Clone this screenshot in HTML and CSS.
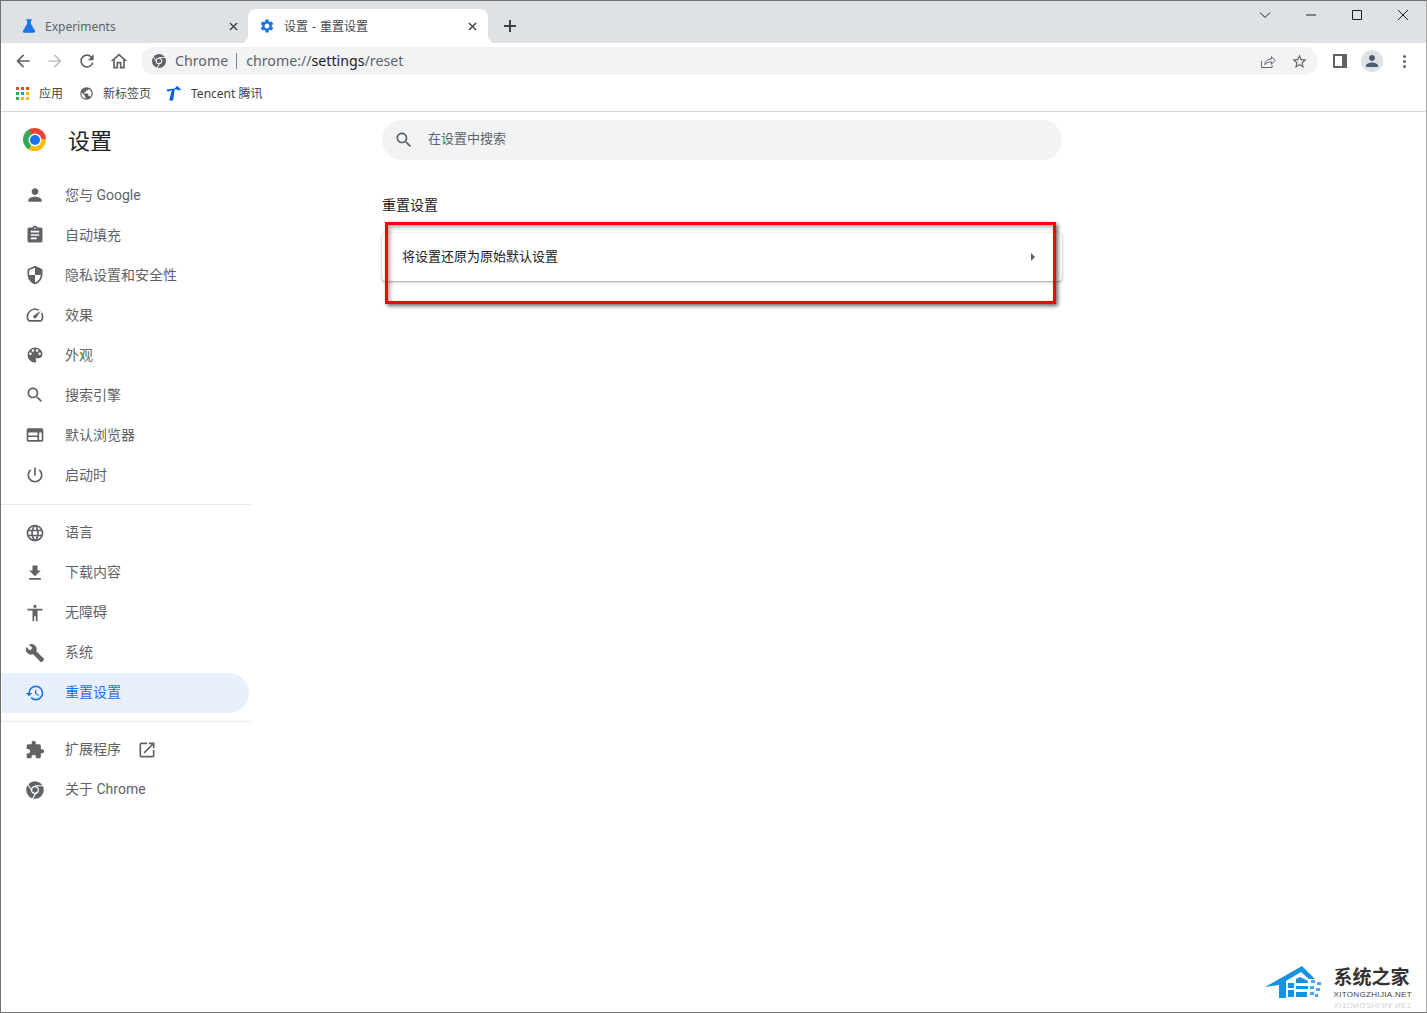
FILE: index.html
```
<!DOCTYPE html>
<html lang="zh-CN">
<head>
<meta charset="utf-8">
<title>设置 - 重置设置</title>
<link rel="stylesheet" href="styles.css">
</head>
<body>
<svg class="sprite" width="0" height="0" aria-hidden="true">
  <defs>
    <symbol id="i-person" viewBox="0 0 24 24"><path d="M12 12c2.21 0 4-1.79 4-4s-1.79-4-4-4-4 1.79-4 4 1.79 4 4 4zm0 2c-2.67 0-8 1.34-8 4v2h16v-2c0-2.66-5.33-4-8-4z"/></symbol>
    <symbol id="i-assign" viewBox="0 0 24 24"><path d="M19 3h-4.18C14.4 1.84 13.3 1 12 1c-1.3 0-2.4.84-2.82 2H5c-1.1 0-2 .9-2 2v14c0 1.1.9 2 2 2h14c1.1 0 2-.9 2-2V5c0-1.1-.9-2-2-2zm-7 0c.55 0 1 .45 1 1s-.45 1-1 1-1-.45-1-1 .45-1 1-1zm2 14H7v-2h7v2zm3-4H7v-2h10v2zm0-4H7V7h10v2z"/></symbol>
    <symbol id="i-shield" viewBox="0 0 24 24"><path d="M12 1L3 5v6c0 5.55 3.84 10.74 9 12 5.16-1.26 9-6.45 9-12V5l-9-4zm0 10.99h7c-.53 4.12-3.28 7.79-7 8.94V12H5V6.3l7-3.11v8.8z"/></symbol>
    <symbol id="i-speed" viewBox="0 0 24 24"><path d="M20.38 8.57l-1.23 1.85a8 8 0 0 1-.22 7.58H5.07A8 8 0 0 1 15.58 6.85l1.85-1.23A10 10 0 0 0 3.35 19a2 2 0 0 0 1.72 1h13.85a2 2 0 0 0 1.74-1 10 10 0 0 0-.27-10.44zm-9.79 6.84a2 2 0 0 0 2.83 0l5.66-8.49-8.49 5.66a2 2 0 0 0 0 2.83z"/></symbol>
    <symbol id="i-palette" viewBox="0 0 24 24"><path d="M12 3a9 9 0 0 0 0 18c.83 0 1.5-.67 1.5-1.5 0-.39-.15-.74-.39-1.01-.23-.26-.38-.61-.38-.99 0-.83.67-1.5 1.5-1.5H16c2.76 0 5-2.24 5-5 0-4.42-4.03-8-9-8zm-5.5 9c-.83 0-1.5-.67-1.5-1.5S5.67 9 6.5 9 8 9.67 8 10.5 7.33 12 6.5 12zm3-4C8.67 8 8 7.33 8 6.5S8.67 5 9.5 5s1.5.67 1.5 1.5S10.33 8 9.5 8zm5 0c-.83 0-1.5-.67-1.5-1.5S13.67 5 14.5 5s1.5.67 1.5 1.5S15.33 8 14.5 8zm3 4c-.83 0-1.5-.67-1.5-1.5S16.67 9 17.5 9s1.5.67 1.5 1.5-.67 1.5-1.5 1.5z"/></symbol>
    <symbol id="i-search" viewBox="0 0 24 24"><path d="M15.5 14h-.79l-.28-.27C15.41 12.59 16 11.11 16 9.5 16 5.91 13.09 3 9.5 3S3 5.91 3 9.5 5.91 16 9.5 16c1.61 0 3.09-.59 4.23-1.57l.27.28v.79l5 4.99L20.49 19l-4.99-5zm-6 0C7.01 14 5 11.99 5 9.5S7.01 5 9.5 5 14 7.01 14 9.5 11.99 14 9.5 14z"/></symbol>
    <symbol id="i-web" viewBox="0 0 24 24"><path d="M20 4H4c-1.1 0-2 .9-2 2v12c0 1.1.9 2 2 2h16c1.1 0 2-.9 2-2V6c0-1.1-.9-2-2-2zM4 9h11v3.5H4V9zm0 5.5h11V18H4v-3.5zM20 18h-3V9h3v9z"/></symbol>
    <symbol id="i-power" viewBox="0 0 24 24"><path d="M13 3h-2v10h2V3zm4.83 2.17l-1.42 1.42C17.99 7.86 19 9.81 19 12c0 3.87-3.13 7-7 7s-7-3.13-7-7c0-2.19 1.01-4.14 2.58-5.42L6.17 5.17C4.23 6.82 3 9.26 3 12c0 4.97 4.03 9 9 9s9-4.03 9-9c0-2.74-1.23-5.18-3.17-6.83z"/></symbol>
    <symbol id="i-lang" viewBox="0 0 24 24"><path d="M11.99 2C6.47 2 2 6.48 2 12s4.47 10 9.99 10C17.52 22 22 17.52 22 12S17.52 2 11.99 2zm6.93 6h-2.95c-.32-1.25-.78-2.45-1.38-3.56 1.84.63 3.37 1.91 4.33 3.56zM12 4.04c.83 1.2 1.48 2.53 1.91 3.96h-3.82c.43-1.43 1.08-2.76 1.91-3.96zM4.26 14C4.1 13.36 4 12.69 4 12s.1-1.36.26-2h3.38c-.08.66-.14 1.32-.14 2 0 .68.06 1.34.14 2H4.26zm.82 2h2.95c.32 1.25.78 2.45 1.38 3.56-1.84-.63-3.37-1.9-4.33-3.56zm2.95-8H5.08c.96-1.66 2.49-2.93 4.33-3.56C8.81 5.55 8.35 6.75 8.03 8zM12 19.96c-.83-1.2-1.48-2.53-1.91-3.96h3.82c-.43 1.43-1.08 2.76-1.91 3.96zM14.34 14H9.66c-.09-.66-.16-1.32-.16-2 0-.68.07-1.35.16-2h4.68c.09.65.16 1.32.16 2 0 .68-.07 1.34-.16 2zm.25 5.56c.6-1.11 1.06-2.31 1.38-3.56h2.95c-.96 1.65-2.49 2.93-4.33 3.56zM16.36 14c.08-.66.14-1.32.14-2 0-.68-.06-1.34-.14-2h3.38c.16.64.26 1.31.26 2s-.1 1.36-.26 2h-3.38z"/></symbol>
    <symbol id="i-download" viewBox="0 0 24 24"><path d="M19 9h-4V3H9v6H5l7 7 7-7zM5 18v2h14v-2H5z"/></symbol>
    <symbol id="i-access" viewBox="0 0 24 24"><path d="M12 2c1.1 0 2 .9 2 2s-.9 2-2 2-2-.9-2-2 .9-2 2-2zm9 7h-6v13h-2v-6h-2v6H9V9H3V7h18v2z"/></symbol>
    <symbol id="i-build" viewBox="0 0 24 24"><path d="M22.7 19l-9.1-9.1c.9-2.3.4-5-1.5-6.9-2-2-5-2.4-7.4-1.3L9 6 6 9 1.6 4.7C.4 7.1.9 10.1 2.9 12.1c1.9 1.9 4.6 2.4 6.9 1.5l9.1 9.1c.4.4 1 .4 1.4 0l2.3-2.3c.5-.4.5-1.1.1-1.4z"/></symbol>
    <symbol id="i-restore" viewBox="0 0 24 24"><path d="M13 3a9 9 0 0 0-9 9H1l3.89 3.89.07.14L9 12H6c0-3.87 3.13-7 7-7s7 3.13 7 7-3.13 7-7 7c-1.93 0-3.68-.79-4.94-2.06l-1.42 1.42A8.954 8.954 0 0 0 13 21a9 9 0 0 0 0-18zm-1 5v5l4.28 2.54.72-1.21-3.5-2.08V8H12z"/></symbol>
    <symbol id="i-ext" viewBox="0 0 24 24"><path d="M20.5 11H19V7c0-1.1-.9-2-2-2h-4V3.5C13 2.12 11.88 1 10.5 1S8 2.12 8 3.5V5H4c-1.1 0-1.99.9-1.99 2v3.8H3.5c1.49 0 2.7 1.21 2.7 2.7s-1.21 2.7-2.7 2.7H2V20c0 1.1.9 2 2 2h3.8v-1.5c0-1.49 1.21-2.7 2.7-2.7 1.49 0 2.7 1.21 2.7 2.7V22H17c1.1 0 2-.9 2-2v-4h1.5c1.38 0 2.5-1.12 2.5-2.5S21.88 11 20.5 11z"/></symbol>
    <symbol id="i-open" viewBox="0 0 24 24"><path d="M19 19H5V5h7V3H5c-1.11 0-2 .9-2 2v14c0 1.1.89 2 2 2h14c1.1 0 2-.9 2-2v-7h-2v7zM14 3v2h3.59l-9.83 9.83 1.41 1.41L19 6.41V10h2V3h-7z"/></symbol>
    <symbol id="i-chrome" viewBox="0 0 24 24"><path fill-rule="evenodd" d="M12 1.500a10.500 10.500 0 1 0 0 21 10.500 10.500 0 0 0 0-21zm0 5.700a4.800 4.800 0 1 1 0 9.600 4.800 4.800 0 0 1 0-9.600z"/><circle cx="12" cy="12" r="3.300"/><path d="M12 6.300h9.600v1.300H12zM7.500 13.300L2.900 5.400l1.100-.7 4.600 7.900zM14.400 14.600l-4.800 8.200-1.100-.7 4.800-8.200z" fill="#fff"/></symbol>
    <symbol id="i-gear" viewBox="0 0 24 24"><path d="M19.14 12.94c.04-.3.06-.61.06-.94 0-.32-.02-.64-.07-.94l2.03-1.58c.18-.14.23-.41.12-.61l-1.92-3.32c-.12-.22-.37-.29-.59-.22l-2.39.96c-.5-.38-1.03-.7-1.62-.94l-.36-2.54c-.04-.24-.24-.41-.48-.41h-3.84c-.24 0-.43.17-.47.41l-.36 2.54c-.59.24-1.13.57-1.62.94l-2.39-.96c-.22-.08-.47 0-.59.22L2.74 8.87c-.12.21-.08.47.12.61l2.03 1.58c-.05.3-.09.63-.09.94s.02.64.07.94l-2.03 1.58c-.18.14-.23.41-.12.61l1.92 3.32c.12.22.37.29.59.22l2.39-.96c.5.38 1.03.7 1.62.94l.36 2.54c.05.24.24.41.48.41h3.84c.24 0 .44-.17.47-.41l.36-2.54c.59-.24 1.13-.56 1.62-.94l2.39.96c.22.08.47 0 .59-.22l1.92-3.32c.12-.22.07-.47-.12-.61l-2.01-1.58zM12 15.6c-1.98 0-3.6-1.62-3.6-3.6s1.62-3.6 3.6-3.6 3.6 1.62 3.6 3.6-1.62 3.6-3.6 3.6z"/></symbol>
  </defs>
</svg>

<div class="window">
  <header class="tabstrip">
    <div class="tab">
      <svg class="tab-icon blue" viewBox="0 0 24 24"><path d="M8 2h8v2.200h-1.200v4.600L21 19.200a1.900 1.900 0 0 1-1.600 2.800H4.600a1.900 1.900 0 0 1-1.600-2.800L9.200 8.800V4.200H8z"/></svg>
      <span class="tab-title">Experiments</span>
      <svg class="tab-close" viewBox="0 0 10 10"><path d="M1 1l8 8M9 1l-8 8"/></svg>
    </div>
    <div class="tab tab-active">
      <svg class="tab-icon blue" viewBox="0 0 24 24"><use href="#i-gear"/></svg>
      <span class="tab-title">设置 - 重置设置</span>
      <svg class="tab-close" viewBox="0 0 10 10"><path d="M1 1l8 8M9 1l-8 8"/></svg>
    </div>
    <svg class="new-tab" viewBox="0 0 12 12"><path d="M6 0v12M0 6h12"/></svg>
    <div class="window-controls">
      <svg class="win-btn" viewBox="0 0 12 12"><path d="M1 3.500l5 5 5-5"/></svg>
      <svg class="win-btn" viewBox="0 0 12 12"><path d="M1 6h10"/></svg>
      <svg class="win-btn" viewBox="0 0 12 12"><path d="M1.500 1.500h9v9h-9z"/></svg>
      <svg class="win-btn" viewBox="0 0 12 12"><path d="M1 1l10 10M11 1L1 11"/></svg>
    </div>
  </header>

  <div class="toolbar">
    <svg class="tool-icon" viewBox="0 0 24 24"><path d="M20 11H7.830l5.590-5.590L12 4l-8 8 8 8 1.410-1.410L7.830 13H20v-2z"/></svg>
    <svg class="tool-icon muted" viewBox="0 0 24 24"><path d="M12 4l-1.410 1.410L16.170 11H4v2h12.170l-5.580 5.590L12 20l8-8z"/></svg>
    <svg class="tool-icon" viewBox="0 0 24 24"><path d="M17.650 6.350A7.958 7.958 0 0 0 12 4c-4.420 0-7.990 3.580-7.990 8s3.570 8 7.990 8c3.730 0 6.840-2.550 7.730-6h-2.080A5.990 5.990 0 0 1 12 18c-3.310 0-6-2.690-6-6s2.690-6 6-6c1.660 0 3.140.690 4.220 1.780L13 11h7V4l-2.350 2.350z"/></svg>
    <svg class="tool-icon" viewBox="0 0 24 24"><path d="M12 3L2 12h3v9h6v-6h2v6h6v-9h3L12 3zm5 16h-2v-6H9v6H7v-8.800l5-4.500 5 4.500V19z"/></svg>
    <div class="omnibox">
      <svg class="omni-site" viewBox="0 0 24 24"><use href="#i-chrome"/></svg>
      <span class="omni-chip">Chrome</span>
      <span class="omni-sep"></span>
      <span class="omni-url">chrome://<b class="omni-host">settings</b>/reset</span>
      <svg class="omni-icon" viewBox="0 0 24 24"><path class="line" d="M3.500 11v9.500h15V17"/><path class="line" d="M8 16.500c.5-5 4.500-8 9.500-8V5l5 5.500-5 5.500v-3.500c-3.500 0-7 1-9.500 4z"/></svg>
      <svg class="omni-icon" viewBox="0 0 24 24"><path d="M22 9.240l-7.190-.620L12 2 9.190 8.630 2 9.240l5.460 4.730L5.820 21 12 17.270 18.180 21l-1.630-7.030L22 9.240zM12 15.400l-3.760 2.270 1-4.280-3.320-2.880 4.380-.380L12 6.100l1.710 4.040 4.380.380-3.320 2.880 1 4.280L12 15.400z"/></svg>
    </div>
    <div class="toolbar-end">
      <span class="side-panel"></span>
      <span class="avatar"><svg viewBox="0 0 24 24"><use href="#i-person"/></svg></span>
      <span class="dots"><i></i><i></i><i></i></span>
    </div>
  </div>

  <nav class="bookmarks">
    <a class="bookmark bookmark-apps">
      <svg class="bm-apps" viewBox="0 0 13 13">
        <rect class="c-r" x="0" y="0" width="3" height="3"/><rect class="c-r" x="5" y="0" width="3" height="3"/><rect class="c-r" x="10" y="0" width="3" height="3"/>
        <rect class="c-g" x="0" y="5" width="3" height="3"/><rect class="c-b" x="5" y="5" width="3" height="3"/><rect class="c-y" x="10" y="5" width="3" height="3"/>
        <rect class="c-g" x="0" y="10" width="3" height="3"/><rect class="c-y" x="5" y="10" width="3" height="3"/><rect class="c-y" x="10" y="10" width="3" height="3"/>
      </svg>
      <span>应用</span>
    </a>
    <a class="bookmark">
      <svg class="bm-icon" viewBox="0 0 24 24"><path d="M12 2a10 10 0 1 0 0 20 10 10 0 0 0 0-20zM4 12c0-.6.1-1.200.2-1.800L9 15v1c0 1.100.9 2 2 2v1.900A8 8 0 0 1 4 12zm13.900 5.400c-.3-.8-1-1.400-1.900-1.400h-1v-3c0-.6-.4-1-1-1H8v-2h2c.6 0 1-.4 1-1V7h2c1.100 0 2-.9 2-2v-.4a8 8 0 0 1 2.900 12.800z"/></svg>
      <span>新标签页</span>
    </a>
    <a class="bookmark bookmark-tc">
      <svg class="bm-icon tencent" viewBox="0 0 24 24"><path d="M2 6.500L14 5l3-4 6 6-4.500.500-3-1.500-2 .800L11.500 22H6l3.500-15L4 9.500z"/></svg>
      <span class="dark">Tencent 腾讯</span>
    </a>
  </nav>

  <div class="page">
    <aside class="sidebar">
      <div class="brand">
        <span class="logo"></span>
        <h1 class="brand-title">设置</h1>
      </div>
      <ul class="menu">
        <li class="item"><svg class="ico"><use href="#i-person"/></svg>您与 Google</li>
        <li class="item"><svg class="ico"><use href="#i-assign"/></svg>自动填充</li>
        <li class="item"><svg class="ico"><use href="#i-shield"/></svg>隐私设置和安全性</li>
        <li class="item"><svg class="ico"><use href="#i-speed"/></svg>效果</li>
        <li class="item"><svg class="ico"><use href="#i-palette"/></svg>外观</li>
        <li class="item"><svg class="ico"><use href="#i-search"/></svg>搜索引擎</li>
        <li class="item"><svg class="ico"><use href="#i-web"/></svg>默认浏览器</li>
        <li class="item"><svg class="ico"><use href="#i-power"/></svg>启动时</li>
      </ul>
      <hr class="divider divider-first">
      <ul class="menu">
        <li class="item"><svg class="ico"><use href="#i-lang"/></svg>语言</li>
        <li class="item"><svg class="ico"><use href="#i-download"/></svg>下载内容</li>
        <li class="item"><svg class="ico"><use href="#i-access"/></svg>无障碍</li>
        <li class="item"><svg class="ico"><use href="#i-build"/></svg>系统</li>
        <li class="item item-active"><svg class="ico"><use href="#i-restore"/></svg>重置设置</li>
      </ul>
      <hr class="divider">
      <ul class="menu">
        <li class="item"><svg class="ico"><use href="#i-ext"/></svg>扩展程序<svg class="ico-open"><use href="#i-open"/></svg></li>
        <li class="item"><svg class="ico"><use href="#i-chrome"/></svg>关于 Chrome</li>
      </ul>
    </aside>

    <main class="content">
      <div class="search">
        <svg class="search-icon"><use href="#i-search"/></svg>
        <span class="search-text">在设置中搜索</span>
      </div>
      <h2 class="section-title">重置设置</h2>
      <section class="card">
        <div class="row">
          <span class="row-text">将设置还原为原始默认设置</span>
          <span class="arrow"></span>
        </div>
      </section>
    </main>
  </div>

  <div class="highlight"></div>

  <div class="watermark">
    <svg class="wm-house" viewBox="0 0 58 34">
      <path class="wm-a" d="M0 21L37 0l13 13h-6l-8-7-15 9v17h-7V19z"/>
      <path class="wm-a" d="M23 17h6v5h-6zM23 24h6v7h-6zM31 13l4-2 8 4v2H31zM31 20h12v3H31zM31 26h11v5H31z"/>
      <path class="wm-b" d="M46 14h4v3h-4zM52 16h4v3h-4zM45 20h4v3h-4zM51 22h4v3h-4zM45 26h4v3h-4zM50 28h3v3h-3z"/>
    </svg>
    <div class="wm-text">
      <strong class="wm-name">系统之家</strong>
      <span class="wm-url wm-url-main">XITONGZHIJIA.NET</span>
      <span class="wm-url wm-mirror">XITONGZHIJIA.NET</span>
    </div>
  </div>
</div>
</body>
</html>
```
FILE: styles.css
```
* { box-sizing: border-box; }
html, body { margin: 0; padding: 0; height: 100%; background: #fff; }
body {
  font-family: "Noto Sans", "Noto Sans CJK SC", sans-serif;
  overflow: hidden;
}
.sprite { position: absolute; }
ul { list-style: none; margin: 0; padding: 0; }
h1, h2 { margin: 0; font-weight: 400; }

.window {
  position: relative;
  width: 1427px;
  height: 1013px;
  border: 1px solid #6f7072;
  border-right-color: #a8a8a8;
  display: flex;
  flex-direction: column;
  background: #fff;
}

/* tab strip */
.tabstrip {
  height: 42px;
  flex: none;
  background: #dee1e6;
  display: flex;
  align-items: flex-end;
  padding-left: 8px;
}
.tab {
  width: 239px;
  height: 34px;
  display: flex;
  align-items: center;
  padding: 0 8px 0 12px;
  font-size: 12px;
  color: #5f6368;
}
.tab-active {
  position: relative;
  width: 240px;
  background: #fff;
  border-radius: 8px 8px 0 0;
  color: #45494e;
  padding-left: 11px;
}
.tab-active::before,
.tab-active::after {
  content: "";
  position: absolute;
  bottom: 0;
  width: 8px;
  height: 8px;
}
.tab-active::before {
  left: -8px;
  background: radial-gradient(circle at 0 0, #dee1e6 8px, #fff 8.500px);
}
.tab-active::after {
  right: -8px;
  background: radial-gradient(circle at 100% 0, #dee1e6 8px, #fff 8.500px);
}
.tab-icon { width: 16px; height: 16px; flex: none; }
.blue { fill: #1a73e8; }
.tab-title { margin-left: 8px; flex: 1; white-space: nowrap; word-spacing: 1px; }
.tab-active .tab-title { margin-left: 9px; }
.tab-close { width: 9px; height: 9px; flex: none; margin-right: 2.500px; fill: none; stroke: #3c4043; stroke-width: 1.500; }
.tab-active .tab-close { margin-right: 3.500px; }
.new-tab { width: 12px; height: 12px; margin: 0 0 11px 16px; fill: none; stroke: #3c4043; stroke-width: 2; }
.window-controls {
  margin-left: auto;
  align-self: flex-start;
  display: flex;
  gap: 34px;
  padding: 8px 17px 0 0;
}
.win-btn { width: 12px; height: 12px; fill: none; stroke: #1f1f1f; stroke-width: 1; }

/* toolbar */
.toolbar {
  height: 36px;
  flex: none;
  display: flex;
  align-items: center;
  padding-left: 12px;
  gap: 12px;
}
.tool-icon { width: 20px; height: 20px; flex: none; fill: #5f6368; }
.tool-icon.muted { fill: #bdc1c6; }
.omnibox {
  width: 1177px;
  height: 28px;
  background: #f1f3f4;
  border-radius: 14px;
  display: flex;
  align-items: center;
  padding: 0 10px;
  font-size: 14.200px;
  color: #5f6368;
}
.omni-site { width: 16px; height: 16px; flex: none; fill: #5f6368; }
.omni-chip { margin-left: 8px; padding-bottom: 2px; }
.omni-sep { width: 1px; height: 16px; background: #80868b; margin: 0 9px 0 8px; }
.omni-url { flex: 1; padding-bottom: 2px; }
.omni-host { font-weight: 400; color: #202124; }
.omni-icon { width: 17px; height: 17px; flex: none; margin-left: 15px; fill: #5f6368; }
.omni-icon .line { fill: none; stroke: #5f6368; stroke-width: 1.400; }
.toolbar-end { display: flex; align-items: center; }
.side-panel {
  width: 14px;
  height: 14px;
  margin-left: 3px;
  background: #fff;
  border: solid #5f6368;
  border-width: 2px 5px 2px 2px;
}
.avatar {
  width: 22px;
  height: 22px;
  margin-left: 14px;
  border-radius: 50%;
  background: #dee1e6;
  display: flex;
  align-items: center;
  justify-content: center;
}
.avatar svg { width: 18px; height: 18px; fill: #4d5a70; }
.dots {
  width: 4px;
  margin-left: 20px;
  display: flex;
  flex-direction: column;
  gap: 2px;
}
.dots i { width: 3px; height: 3px; border-radius: 50%; background: #5f6368; }

/* bookmarks */
.bookmarks {
  height: 33px;
  flex: none;
  display: flex;
  align-items: center;
  padding: 0 0 4px 15px;
  gap: 17px;
  border-bottom: 1px solid #d9dadc;
  font-size: 12px;
  color: #45494e;
}
.bookmark { display: flex; align-items: center; gap: 9px; white-space: nowrap; }
.bookmark-apps { gap: 10px; margin-right: -1px; }
.bookmark-tc { margin-left: -3px; }
.bm-apps { width: 13px; height: 13px; flex: none; }
.c-r { fill: #ea4335; } .c-g { fill: #34a853; } .c-b { fill: #4285f4; } .c-y { fill: #fbbc04; }
.bm-icon { width: 15px; height: 15px; flex: none; fill: #5f6368; }
.tencent { width: 17px; height: 17px; fill: #0a5fe0; }
.dark { color: #3c4043; }

/* page */
.page { flex: 1; display: grid; grid-template-columns: 250px 1fr; min-height: 0; }
.sidebar { display: flex; flex-direction: column; }
.brand {
  height: 63px;
  display: flex;
  align-items: center;
  padding-left: 22px;
  flex: none;
}
.logo {
  position: relative;
  width: 23px;
  height: 23px;
  flex: none;
  margin-bottom: 8px;
  border-radius: 50%;
  background: conic-gradient(#ea4335 0 90deg, #fbbc04 90deg 210deg, #34a853 210deg 330deg, #ea4335 330deg);
}
.logo::after {
  content: "";
  position: absolute;
  left: 6.500px;
  top: 6.500px;
  width: 10px;
  height: 10px;
  border-radius: 50%;
  background: #1a73e8;
  box-shadow: 0 0 0 1.500px #fff;
}
.brand-title { margin: 0 0 8px 22px; font-size: 22px; line-height: 30px; color: #202124; }
.menu { display: flex; flex-direction: column; }
.item {
  height: 40px;
  display: flex;
  align-items: center;
  padding: 0 0 2px 24px;
  font-family: Roboto, "Noto Sans CJK SC", sans-serif;
  font-size: 14px;
  color: #5f6368;
  white-space: nowrap;
}
.ico { width: 20px; height: 20px; flex: none; margin: 2px 20px 0 0; fill: #5f6368; }
.ico-open { width: 20px; height: 20px; flex: none; margin: 2px 0 0 16px; fill: #5f6368; }
.divider ~ .menu .item { padding-bottom: 4px; }
.divider ~ .menu .ico,
.divider ~ .menu .ico-open { margin-top: 4px; }
.item-active {
  width: 247px;
  margin-left: 1px;
  padding-left: 23px;
  background: #e8f0fe;
  border-radius: 0 20px 20px 0;
  color: #1a73e8;
}
.divider ~ .menu .item-active { padding-left: 23px; }
.item-active .ico { fill: #1a73e8; }
.divider { height: 1px; width: 100%; margin: 8px 0; border: 0; background: #e8eaed; }
.divider-first { margin-top: 9px; }

/* content */
.content { padding: 8px 0 0 131px; }
.search {
  width: 680px;
  height: 40px;
  background: #f1f3f4;
  border-radius: 20px;
  display: flex;
  align-items: center;
  padding-left: 12px;
  font-size: 13px;
  color: #5f6368;
}
.search-icon { width: 20px; height: 20px; flex: none; margin-right: 14px; fill: #5f6368; }
.search-text { padding-bottom: 6px; }
.section-title { margin-top: 35px; font-size: 14px; line-height: 20px; color: #202124; }
.card {
  width: 680px;
  margin-top: 18px;
  background: #fff;
  border-radius: 4px;
  box-shadow: 0 1px 2px rgba(60,64,67,.35), 0 1px 3px 1px rgba(60,64,67,.12);
}
.row {
  height: 48px;
  display: flex;
  align-items: center;
  justify-content: space-between;
  padding: 0 27px 0 20px;
  font-size: 13px;
  color: #202124;
}
.row-text { padding-bottom: 4px; }
.arrow {
  width: 0;
  height: 0;
  border-left: 4px solid #5f6368;
  border-top: 4px solid transparent;
  border-bottom: 4px solid transparent;
}

/* overlays */
.highlight {
  position: absolute;
  left: 384px;
  top: 221px;
  width: 671px;
  height: 82px;
  border: 3px solid #fa0000;
  box-shadow: 2px 2px 4px rgba(0,0,0,.6), inset 2px 2px 4px rgba(0,0,0,.35);
}
.watermark {
  position: absolute;
  right: 14px;
  bottom: 2px;
  display: flex;
  align-items: flex-start;
  gap: 11px;
}
.wm-house { width: 58px; height: 34px; margin-top: -1px; }
.wm-a { fill: #1593e0; }
.wm-b { fill: #4aa9e8; }
.wm-text { display: flex; flex-direction: column; align-items: flex-start; }
.wm-name { font-size: 19px; line-height: 21px; color: #333; font-weight: 700; }
.wm-url { font-size: 8px; line-height: 10px; letter-spacing: .33px; color: #444; font-family: "Liberation Sans", sans-serif; }
.wm-url-main { margin-top: 2px; }
.wm-mirror { transform: scaleY(-1); opacity: .25; }
```
